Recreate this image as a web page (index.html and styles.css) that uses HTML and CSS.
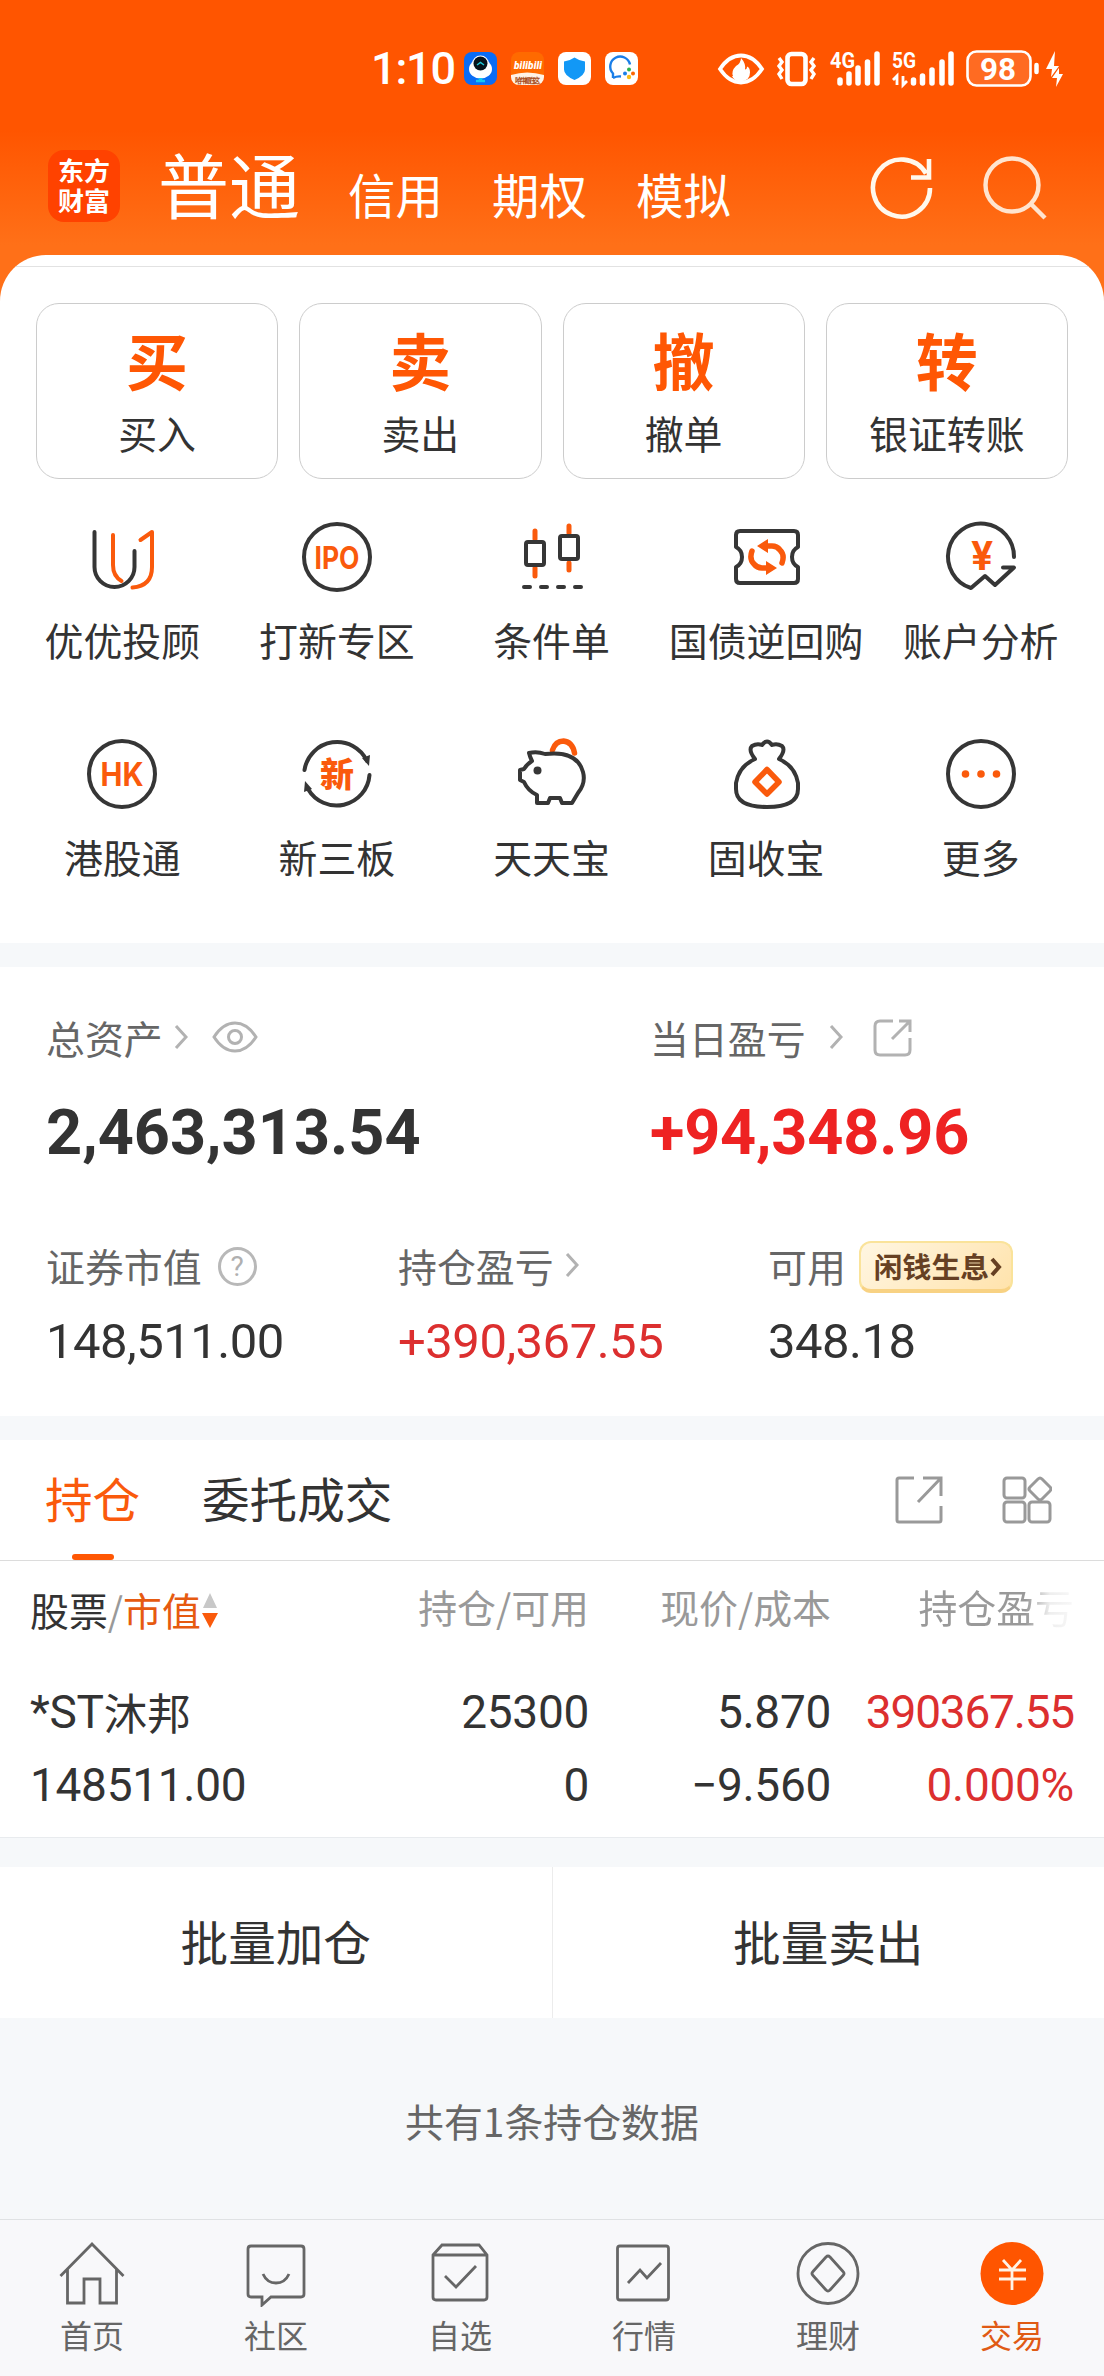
FILE: index.html
```html
<!DOCTYPE html>
<html lang="zh-CN">
<head>
  <meta charset="UTF-8">
  <meta name="viewport" content="width=device-width, initial-scale=1.0">
  <title>交易</title>
  <link rel="stylesheet" href="styles.css">
</head>
<body>
  <div class="top">
    <!-- Status bar -->
    <div class="status">
      <span class="time">1:10</span>
      <div class="apps">
        <svg width="33" height="33" viewBox="0 0 33 33"><rect width="33" height="33" rx="8" fill="#0a6cf5"/><ellipse cx="16.500" cy="17" rx="11.500" ry="9.500" fill="#fff"/><circle cx="16.500" cy="12" r="8.500" fill="#fff"/><circle cx="16.500" cy="11.500" r="7" fill="#06131c"/><path d="M13 13l3.500-2.500L20 13" stroke="#1fc8d8" stroke-width="1.500" fill="none"/><path d="M12 29h4v-3M21 29h-4v-3" stroke="#12c8f0" stroke-width="2.500" fill="none"/></svg>
        <svg width="33" height="33" viewBox="0 0 33 33"><rect width="33" height="33" rx="8" fill="#ff6a00"/><path d="M0 23q16-5 33 0v2a8 8 0 0 1-8 8H8a8 8 0 0 1-8-8z" fill="#fff3e6"/><text x="3" y="17" font-size="10" font-weight="900" font-style="italic" fill="#fff" textLength="28">bilibili</text><text x="4" y="31" font-size="7" font-weight="700" fill="#a8501e" textLength="25">哈牛都在这</text></svg>
        <svg width="33" height="33" viewBox="0 0 33 33"><rect width="33" height="33" rx="8" fill="#fff"/><path d="M16.500 5.500q5 3.500 10.500 4v8q0 6-10.500 10.500Q6 23.500 6 17.500v-8q5.500-.5 10.500-4z" fill="#1298f6"/></svg>
        <svg width="33" height="33" viewBox="0 0 33 33"><rect width="33" height="33" rx="8" fill="#fff"/><path d="M8 26v-4.500A10 10 0 1 1 25 12.500M8 26q4-2 8-1.500" fill="none" stroke="#1a7ee8" stroke-width="2.400"/><circle cx="24" cy="17.500" r="2" fill="#2bb24c"/><circle cx="20" cy="21.500" r="2" fill="#1a7ee8"/><circle cx="28" cy="21.500" r="2" fill="#fb6500"/><circle cx="24" cy="25" r="2.200" fill="#fbbc14"/></svg>
      </div>
      <svg class="sys" width="350" height="40" viewBox="714 48 350 40" fill="#fff">
        <path d="M720 68q9-13.500 21-13.500T762 68q-9 13.500-21 13.500T720 68z" fill="none" stroke="#fff" stroke-width="3.800"/>
        <path d="M741 57q0 5-5 8-5 5-3 10l-1 0q2 5 9 5.500 9-1 9-9 0-5-3-6 0 3-2 3 1-6-4-11.500z"/>
        <rect x="787.500" y="53" width="18" height="30" rx="4" fill="none" stroke="#fff" stroke-width="4.600"/>
        <path d="M779 57l3 4-3 4 3 4-3 4 3 5M814 57l-3 4 3 4-3 4 3 4-3 5" fill="none" stroke="#fff" stroke-width="3.400"/>
        <text x="830" y="67" font-size="22" font-weight="700" textLength="25" lengthAdjust="spacingAndGlyphs">4G</text>
        <path d="M840 79v3M849 73v9M858 67v15M867.500 61v21M877 53v29" stroke="#fff" stroke-width="5.500" stroke-linecap="round"/>
        <text x="892" y="67" font-size="22" font-weight="700" textLength="24" lengthAdjust="spacingAndGlyphs">5G</text>
        <path d="M897 84V75l-4 4M903 75v9l4-4" fill="none" stroke="#fff" stroke-width="2.800"/>
        <path d="M913.500 79v3M922.500 75v7M932 69v13M942 61v21M951 53v29" stroke="#fff" stroke-width="5.500" stroke-linecap="round"/>
        <rect x="967.500" y="50.500" width="63" height="34" rx="9" fill="#ffffff22" stroke="#fff" stroke-width="2.600"/>
        <text x="980" y="79" font-size="31" font-weight="700" textLength="36" lengthAdjust="spacingAndGlyphs">98</text>
        <path d="M1036.500 64v7" stroke="#fff" stroke-width="4.500" stroke-linecap="round"/>
        <path d="M1055 50l-9 18h6l-1 8 8-11h-5zM1059 67l-7 10h5l-1 9 7-13h-4z"/>
      </svg>
    </div>

    <!-- Account switcher -->
    <div class="head">
      <div class="logo"><span>东方</span><span>财富</span></div>
      <span class="mode on">普通</span>
      <span class="mode">信用</span>
      <span class="mode">期权</span>
      <span class="mode">模拟</span>
      <div class="tools">
        <svg width="64" height="64" viewBox="0 0 64 64" fill="none" stroke="#fff8ec" stroke-width="4.600"><path d="M60 32A28.500 28.500 0 1 1 56 17.500M59 3v18.500H41"/></svg>
        <svg width="64" height="64" viewBox="0 0 64 64" fill="none" stroke="#ffe4cf" stroke-width="4.400"><circle cx="29" cy="29" r="26.500"/><path d="M47 47l15 15"/></svg>
      </div>
    </div>

    <div class="panel">
      <div class="edge"></div>
      <div class="cards">
        <div class="card"><b>买</b><span>买入</span></div>
        <div class="card"><b>卖</b><span>卖出</span></div>
        <div class="card"><b>撤</b><span>撤单</span></div>
        <div class="card"><b>转</b><span>银证转账</span></div>
      </div>

      <div class="menu">
        <div class="item">
          <svg viewBox="0 0 80 80"><path class="o" d="M31 18v30q0 11 8.500 16M50.500 70.500Q70 69 70 50V15l-11.500 8"/><path d="M12.500 15v35a20 20 0 0 0 40 0V34"/></svg>
          <span>优优投顾</span>
        </div>
        <div class="item">
          <svg viewBox="0 0 80 80"><circle cx="40" cy="40" r="33"/><text class="lat" x="17.500" y="51.500" font-size="31" textLength="45" lengthAdjust="spacingAndGlyphs">IPO</text></svg>
          <span>打新专区</span>
        </div>
        <div class="item">
          <svg viewBox="0 0 80 80"><path class="o" d="M24 14v8M24 51v8M58 9v7M58 46v7" stroke-width="5"/><rect x="15" y="25" width="18" height="23" rx="2"/><rect x="49" y="19" width="18" height="23" rx="2"/><path d="M13 70h6M30 70h6M47 70h6M64 70h6"/></svg>
          <span>条件单</span>
        </div>
        <div class="item">
          <svg viewBox="0 0 80 80"><path d="M10 30V18q0-4 4-4h54q4 0 4 4v12q-6 3-6 10t6 10v12q0 4-4 4H14q-4 0-4-4V50q6-3 6-10t-6-10z"/><path class="o thick" d="M56 46q3-8-2-13-3-4-8-4h-6M26 34q-3 8 2 13 3 4 8 4h6"/><path class="f" d="M31 29l11-7v14zM51 51l-11-7v14z"/></svg>
          <span>国债逆回购</span>
        </div>
        <div class="item">
          <svg viewBox="0 0 80 80"><path d="M73 40A33 33 0 1 0 30 71l14-12 10 9 19-17.500H62"/><text class="lat" x="41" y="53" font-size="39" text-anchor="middle">¥</text></svg>
          <span>账户分析</span>
        </div>
        <div class="item">
          <svg viewBox="0 0 80 80"><circle cx="40" cy="40" r="33"/><text class="lat" x="18.500" y="51.500" font-size="32" textLength="43" lengthAdjust="spacingAndGlyphs">HK</text></svg>
          <span>港股通</span>
        </div>
        <div class="item">
          <svg viewBox="0 0 80 80"><path d="M7.500 36A33 33 0 0 1 70 27M72.500 41A33 33 0 0 1 11 55"/><path class="d" d="M65 24l8-3-1 11zM7 58l1-11 7 8z"/><text x="40" y="52.500" font-size="34" text-anchor="middle">新</text></svg>
          <span>新三板</span>
        </div>
        <div class="item">
          <svg viewBox="0 0 80 80"><path class="o thick" d="M41.500 16q3-9 11-9 9 1 11 12"/><path d="M18 19q8-2 16 1 32-4 38 18 3 11-5 21l-6 10H51l-2-5H39l-2 5H26v-8q-9-4-13-13l-4-2V36l4-1q3-5 8-8-2-4-3-8z"/><circle class="d" cx="26.500" cy="36.500" r="4"/></svg>
          <span>天天宝</span>
        </div>
        <div class="item">
          <svg viewBox="0 0 80 80"><path d="M29 25q-7-9-3-13 5-3 10-1 5-7 10 0 5-2 10 1 4 4-3 13 16 7 19 24v6q0 18-31 18T10 55v-6q3-17 19-24"/><path class="o thick" d="M41 35.500L53 48 41 60 29 48z"/></svg>
          <span>固收宝</span>
        </div>
        <div class="item">
          <svg viewBox="0 0 80 80"><circle cx="40" cy="40" r="33"/><g class="f"><circle cx="24.500" cy="40" r="3.800"/><circle cx="40" cy="40" r="3.800"/><circle cx="55.500" cy="40" r="3.800"/></g></svg>
          <span>更多</span>
        </div>
      </div>
    </div>
  </div>

  <!-- Assets -->
  <section class="assets">
    <div class="sum">
      <div class="cell">
        <div class="label">总资产<svg class="arrow" width="14" height="24" viewBox="0 0 14 24"><path d="M2 1l10 11L2 23"/></svg>
          <svg class="eye" width="46" height="32" viewBox="0 0 46 32"><path d="M2 16Q11 2 23 2t21 14Q35 30 23 30T2 16z"/><circle cx="23" cy="16" r="6.500"/></svg>
        </div>
        <div class="big">2,463,313.54</div>
      </div>
      <div class="cell">
        <div class="label">当日盈亏<svg class="arrow far" width="14" height="24" viewBox="0 0 14 24"><path d="M2 1l10 11L2 23"/></svg>
          <svg class="share" width="40" height="40" viewBox="0 0 40 40"><path d="M20 3H7q-5 0-5 5v24q0 5 5 5h25q5 0 5-5V20M26 3h11v11M37 3L19 21"/></svg>
        </div>
        <div class="big up">+94,348.96</div>
      </div>
    </div>
    <div class="detail">
      <div class="cell">
        <div class="label">证券市值<span class="help">?</span></div>
        <div class="mid">148,511.00</div>
      </div>
      <div class="cell">
        <div class="label">持仓盈亏<svg class="arrow" width="14" height="24" viewBox="0 0 14 24"><path d="M2 1l10 11L2 23"/></svg></div>
        <div class="mid red">+390,367.55</div>
      </div>
      <div class="cell">
        <div class="label">可用<span class="tag">闲钱生息<svg width="14" height="24" viewBox="0 0 14 24"><path d="M3 4l7 8-7 8"/></svg></span></div>
        <div class="mid">348.18</div>
      </div>
    </div>
  </section>

  <!-- Positions -->
  <section class="hold">
    <div class="tabs">
      <span class="tab on">持仓</span>
      <span class="tab">委托成交</span>
      <div class="acts">
        <svg width="48" height="48" viewBox="0 0 48 48"><path d="M19 2H4q-2 0-2 2v40q0 2 2 2h40q2 0 2-2V30M28 2h18v18M46 2L23 26"/></svg>
        <svg width="50" height="48" viewBox="0 0 50 48"><rect x="2" y="2" width="21" height="20" rx="3"/><rect x="2" y="26" width="21" height="20" rx="3"/><rect x="27" y="26" width="21" height="20" rx="3"/><path d="M36 3q2-2 4 0l8 8q2 2 0 4l-8 8q-2 2-4 0l-8-8q-2-2 0-4z"/></svg>
      </div>
    </div>
    <div class="grid th">
      <span class="first"><i>股票</i>/<em>市值</em><svg width="16" height="36" viewBox="0 0 16 36"><path d="M8 0l7 15H1z" fill="#c8c8c8"/><path d="M8 35l8-15H0z" fill="#fa5a0c"/></svg></span>
      <span>持仓/可用</span>
      <span>现价/成本</span>
      <span class="fade">持仓盈亏</span>
    </div>
    <div class="grid row">
      <span class="first">*ST<i>沐邦</i></span>
      <span>25300</span>
      <span>5.870</span>
      <span class="red fit">390367.55</span>
    </div>
    <div class="grid row second">
      <span class="first">148511.00</span>
      <span>0</span>
      <span>−9.560</span>
      <span class="red">0.000%</span>
    </div>
  </section>

  <div class="batch">
    <span>批量加仓</span>
    <span>批量卖出</span>
  </div>

  <p class="count">共有1条持仓数据</p>

  <!-- Bottom navigation -->
  <nav class="nav">
    <div class="link">
      <svg viewBox="0 0 66 66"><path d="M1.500 35L33 3l31.500 32M8.500 28v34H25V38h16v24h16.500V28"/></svg>
      <span>首页</span>
    </div>
    <div class="link">
      <svg viewBox="0 0 66 66"><path d="M8 5h50q3 0 3 3v45q0 3-3 3H28l-9 8v-8H8q-3 0-3-3V8q0-3 3-3zM20 33q4 9 13 9t13-9"/></svg>
      <span>社区</span>
    </div>
    <div class="link">
      <svg viewBox="0 0 66 66"><path d="M6 14l9-10h37l8 10v42q0 3-3 3H9q-3 0-3-3zM6 14h54M18 35l11 11 20-21"/></svg>
      <span>自选</span>
    </div>
    <div class="link">
      <svg viewBox="0 0 66 66"><rect x="6.500" y="5" width="51" height="54" rx="2.500"/><path d="M17 42l12-13 7 8 14-15"/></svg>
      <span>行情</span>
    </div>
    <div class="link">
      <svg viewBox="0 0 66 66"><circle cx="33" cy="32.500" r="30"/><path d="M31 16q2-2 4 0l13 14.500q2 2 0 4L35 49q-2 2-4 0L18 34.500q-2-2 0-4z"/></svg>
      <span>理财</span>
    </div>
    <div class="link on">
      <svg viewBox="0 0 66 66"><circle cx="33" cy="32.500" r="31.500"/><path d="M24 19l9 10 9-10M33 29v20M20 29h27M20 38h27"/></svg>
      <span>交易</span>
    </div>
  </nav>
</body>
</html>
```

FILE: styles.css
```css
* {
  box-sizing: border-box;
}
body {
  margin: 0;
  width: 1104px;
  height: 2376px;
  overflow: hidden;
  background: #f6f8fa;
  color: #333;
  font-family: "Noto Sans CJK SC", sans-serif;
  font-size: 38.9px;
}
svg {
  display: block;
  flex: none;
}
i, em {
  font-style: normal;
}
.top {
  height: 943px;
  background: linear-gradient(#ff5500 0, #ff5500 130px, #ff7018 245px, #ff7018 100%);
}

/* Status bar */
.status {
  display: flex;
  align-items: center;
  height: 137px;
  padding-left: 371px;
  color: #fff;
  font-family: Roboto, sans-serif;
}
.time {
  width: 93px;
  font-size: 45px;
  font-weight: 500;
  line-height: 50px;
  letter-spacing: -1.2px;
}
.apps {
  display: flex;
  gap: 14px;
  width: 250px;
}

/* Account switcher */
.head {
  display: flex;
  align-items: flex-end;
  height: 118px;
  padding: 0 57px 33px 48px;
  color: #fff;
}
.logo {
  width: 72px;
  height: 72px;
  margin-right: 38px;
  padding-top: 5px;
  border-radius: 16px;
  background: #ff4200;
  font-size: 26px;
  font-weight: 700;
  line-height: 30px;
  text-align: center;
}
.logo span {
  display: block;
}
.mode {
  width: 144px;
  margin-bottom: 3px;
  font-size: 47.4px;
  line-height: 50px;
}
.mode.on {
  width: 190px;
  margin-bottom: 1px;
  font-size: 71px;
  line-height: 78px;
}
.tools {
  display: flex;
  gap: 49px;
  margin-left: auto;
  padding-bottom: 2px;
}

.panel {
  height: 688px;
  padding-top: 11px;
  border-radius: 46px 46px 0 0;
  background: #fff;
  overflow: hidden;
}
.edge {
  height: 1px;
  background: #e2e2e2;
}
.cards {
  display: grid;
  grid-template-columns: repeat(4, 1fr);
  gap: 21px;
  padding: 36px 36px 0;
}
.card {
  display: flex;
  flex-direction: column;
  align-items: center;
  height: 176px;
  border: 1px solid #ccc;
  border-radius: 23px;
}
.card b {
  margin-top: 24px;
  color: #ff5704;
  font-size: 62px;
  line-height: 62px;
}
.card span {
  margin-top: 19px;
  line-height: 46px;
}
.menu {
  display: grid;
  grid-template-columns: repeat(5, 214.6px);
  grid-auto-rows: 217px;
  padding: 38px 15px 0;
}
.item {
  display: flex;
  flex-direction: column;
  align-items: center;
}
.item span {
  margin-top: 19px;
  line-height: 46px;
  white-space: nowrap;
}
.item svg {
  width: 80px;
  height: 80px;
  fill: none;
  stroke: #363636;
  stroke-width: 4;
  stroke-linecap: round;
  stroke-linejoin: round;
}
.item text {
  fill: #fa5a0c;
  stroke: none;
  font-weight: 900;
}
.item .lat {
  font-family: Inter, sans-serif;
  font-weight: 700;
}
.item .o {
  stroke: #fa5a0c;
}
.item .thick {
  stroke-width: 5.5;
}
.item .f {
  fill: #fa5a0c;
  stroke: none;
}
.item .d {
  fill: #363636;
  stroke: none;
}

/* Assets */
.assets {
  height: 449px;
  margin-top: 24px;
  padding: 45px 46px 0;
  background: #fff;
}
.sum {
  display: grid;
  grid-template-columns: 604px 1fr;
  height: 228px;
}
.detail {
  display: grid;
  grid-template-columns: 352px 370px 1fr;
}
.label {
  display: flex;
  align-items: center;
  height: 50px;
  color: #666;
  line-height: 46px;
  white-space: nowrap;
}
.label svg {
  fill: none;
  stroke: #b2b2b2;
  stroke-width: 3;
}
.arrow {
  margin-left: 11px;
}
.arrow.far {
  margin-left: 23px;
}
.eye {
  margin-left: 24px;
}
.share {
  margin: 2px 0 0 30px;
}
.big {
  margin-top: 36px;
  font: 700 63px/70px Roboto, sans-serif;
}
.big.up {
  color: #ee2222;
  letter-spacing: -0.2px;
}
.mid {
  margin-top: 22px;
  font: 400 49px/60px Roboto, sans-serif;
  letter-spacing: -0.5px;
}
.red {
  color: #dc2f2f;
}
.help {
  width: 39px;
  height: 39px;
  margin: 3px 0 0 16px;
  border: 3px solid #b8b8b8;
  border-radius: 50%;
  color: #b0b0b0;
  font: 400 28px/33px Roboto, sans-serif;
  text-align: center;
}
.tag {
  display: flex;
  align-items: center;
  height: 52px;
  margin: 4px 0 0 13px;
  padding: 0 8px 1px 13px;
  border: 2px solid #fae39a;
  border-bottom: 4px solid #f8d283;
  border-radius: 12px;
  background: linear-gradient(135deg, #fff6e2, #ffe3ac);
  color: #664023;
  font-size: 28.8px;
  font-weight: 700;
}
.tag svg {
  margin-top: 3px;
  stroke: #664023;
  stroke-width: 4;
}

/* Positions */
.hold {
  height: 398px;
  margin-top: 24px;
  border-bottom: 1px solid #e8ebee;
  background: #fff;
}
.tabs {
  display: flex;
  height: 121px;
  padding-left: 45px;
  border-bottom: 1px solid #dcdcdc;
  font-size: 47.6px;
  line-height: 116px;
}
.tab.on {
  position: relative;
  width: 157px;
  color: #fa5a0c;
}
.tab.on::after {
  content: '';
  position: absolute;
  left: 27px;
  bottom: 0;
  width: 42px;
  height: 6px;
  border-radius: 3px;
  background: #ff5704;
}
.acts {
  display: flex;
  gap: 59px;
  margin: 36px 52px 0 auto;
}
.acts svg {
  fill: none;
  stroke: #999;
  stroke-width: 3;
}
.grid {
  display: grid;
  grid-template-columns: 319px 240px 242px 243px;
  margin: 0 30px;
  text-align: right;
  white-space: nowrap;
}
.first {
  display: flex;
  align-items: center;
}
.th {
  height: 96px;
  color: #999;
  line-height: 91px;
}
.th i {
  color: #333;
}
.th em {
  margin-right: 1px;
  color: #e65a10;
}
.th svg {
  margin-top: 4px;
}
.fade {
  background: linear-gradient(90deg, #999 0, #999 80%, #eee 90%, #f8f8f8 100%);
  -webkit-background-clip: text;
  background-clip: text;
  color: transparent;
}
.row {
  height: 72px;
  margin-top: 19px;
  font: 400 46px/72px Roboto, sans-serif;
  letter-spacing: -0.3px;
}
.row .fit {
  letter-spacing: -1.2px;
}
.row.second {
  margin-top: 1px;
}
.row i {
  font: 400 43.500px/60px "Noto Sans CJK SC", sans-serif;
  letter-spacing: 0;
}

.batch {
  display: flex;
  height: 151px;
  margin-top: 29px;
  background: #fff;
  font-size: 47.6px;
  line-height: 148px;
  text-align: center;
}
.batch span {
  flex: 1;
}
.batch span + span {
  border-left: 1px solid #ececec;
}
.count {
  height: 201px;
  margin: 0;
  color: #666;
  line-height: 205px;
  text-align: center;
}

/* Bottom navigation */
.nav {
  display: flex;
  height: 157px;
  border-top: 1px solid #e0e2e4;
  background: #f8f8fa;
}
.link {
  display: flex;
  flex: 1;
  flex-direction: column;
  align-items: center;
  padding-top: 21px;
  color: #666;
  font-size: 32px;
  line-height: 40px;
}
.link svg {
  width: 66px;
  height: 66px;
  margin-bottom: 7px;
  fill: none;
  stroke: #666;
  stroke-width: 2.8;
}
.link.on {
  color: #e05a14;
}
.link.on svg {
  stroke: #fff3e6;
}
.link.on circle {
  fill: #ff5500;
  stroke: none;
}
```
